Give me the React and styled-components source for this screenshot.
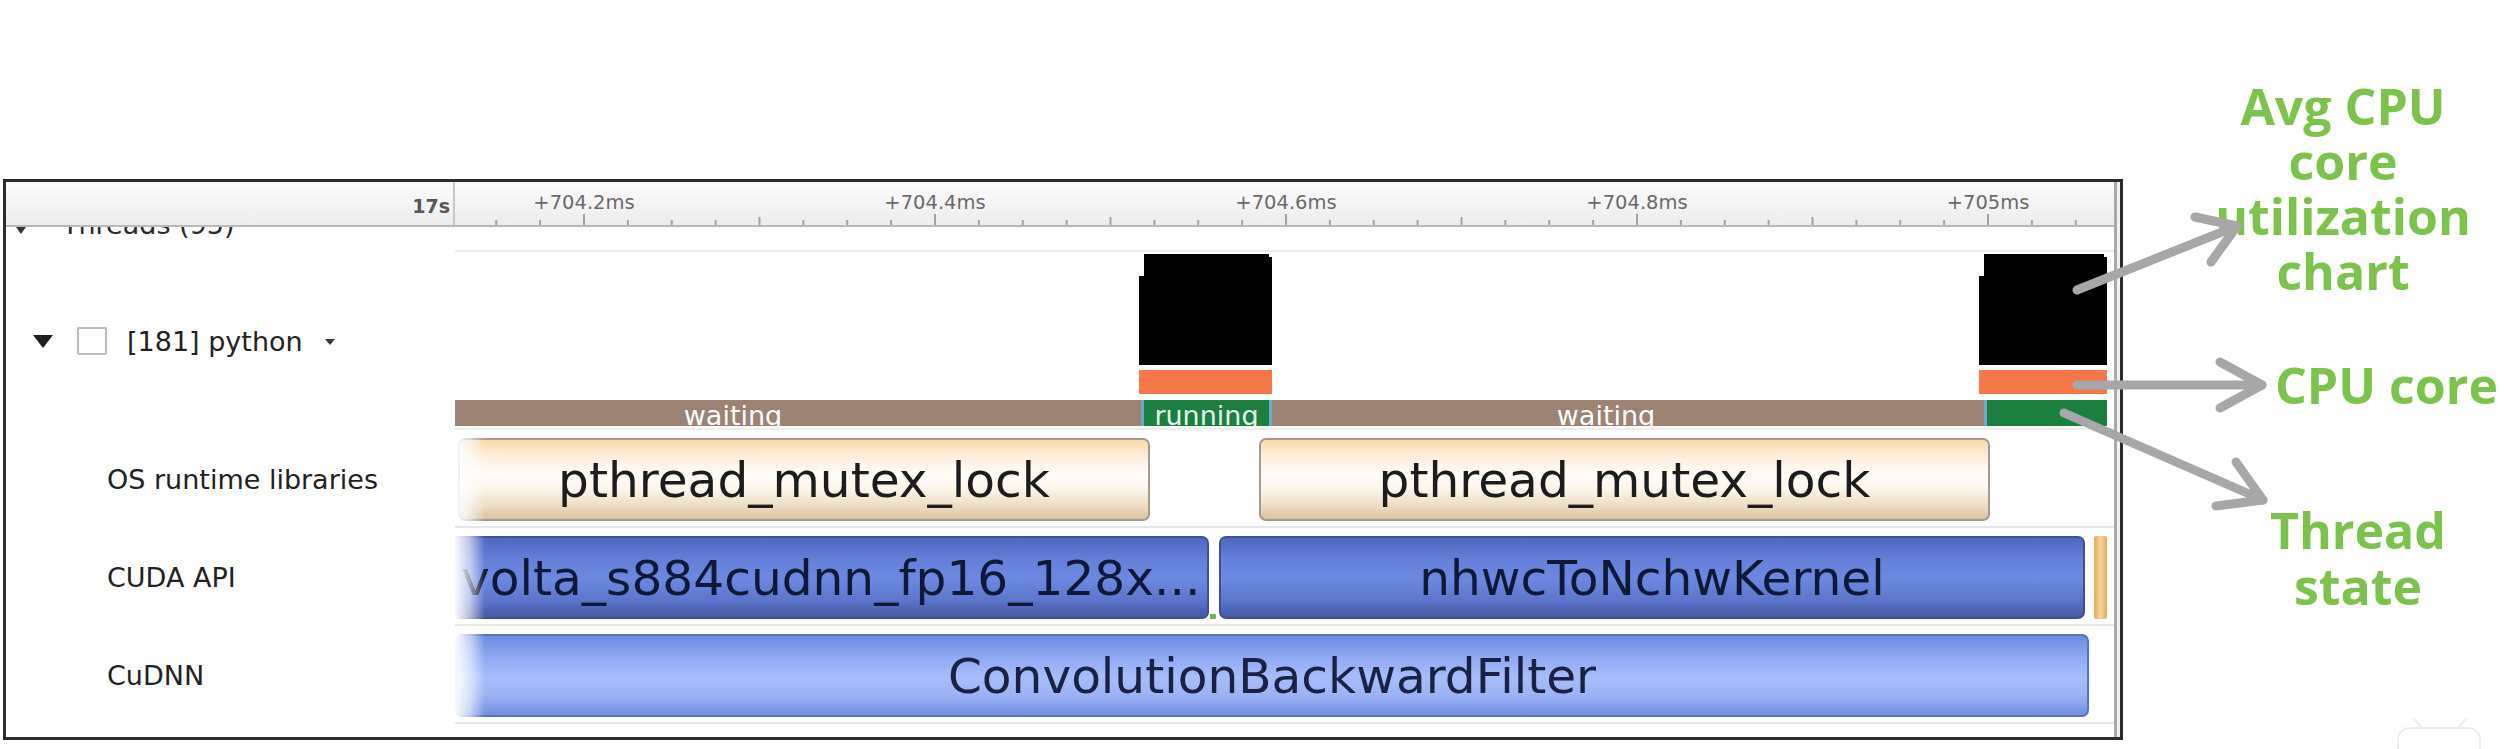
import React from 'react';
import styled, { createGlobalStyle, css } from 'styled-components';

const GlobalStyle = createGlobalStyle`
  html, body { margin: 0; padding: 0; background: #ffffff; }
  body {
    width: 2509px;
    height: 749px;
    overflow: hidden;
    font-family: "DejaVu Sans", "Liberation Sans", sans-serif;
  }
`;

/* ---------- page ---------- */
const Page = styled.div`
  position: relative;
  width: 2509px;
  height: 749px;
  display: flex;
  align-items: flex-start;
  background: #ffffff;
`;

const Panel = styled.section`
  flex: 0 0 2120px;
  margin: 179px 0 0 3px;
  width: 2120px;
  height: 561px;
  box-sizing: border-box;
  border: 3px solid #2c2c2c;
  display: flex;
  background: #ffffff;
  overflow: hidden;
`;

const Main = styled.div`
  flex: 1;
  display: flex;
  flex-direction: column;
  min-width: 0;
`;

const ScrollStrip = styled.div`
  flex: 0 0 6px;
  box-sizing: border-box;
  border-left: 3px solid #a9a9a9;
  background: #f1f1f1;
`;

/* ---------- ruler ---------- */
const Ruler = styled.div`
  display: grid;
  grid-template-columns: 449px 1fr;
  height: 45px;
  box-sizing: border-box;
  border-bottom: 2px solid #b9b9b9;
  background: linear-gradient(#fcfcfc, #ececec);
`;

const RulerCorner = styled.div`
  border-right: 2px solid #c6c6c6;
  display: flex;
  align-items: center;
  justify-content: flex-end;
  padding: 4px 3px 0 0;
  font-size: 19px;
  font-weight: bold;
  color: #585858;
`;

const RulerScale = styled.div`
  position: relative;
  overflow: hidden;
`;

const TickSvg = styled.svg`
  position: absolute;
  left: 0;
  bottom: 0;
`;

const TickLabel = styled.span`
  position: absolute;
  top: 10px;
  transform: translateX(-50%);
  font-size: 19.5px;
  line-height: 22px;
  color: #6a6a6a;
  white-space: nowrap;
`;

/* ---------- rows ---------- */
const Row = styled.div`
  display: grid;
  grid-template-columns: 449px 1fr;
  height: ${(p) => p.$h}px;
`;

const LabelCell = styled.div`
  display: flex;
  align-items: center;
  padding-left: ${(p) => p.$pad}px;
  font-size: 27px;
  color: #222222;
  white-space: nowrap;
  overflow: hidden;
`;

const ClippedLabel = styled.div`
  display: flex;
  align-items: baseline;
  gap: 36px;
  margin-top: -16px;
  line-height: 27px;
  font-size: 27px;
  color: #2a2a2a;
  align-self: flex-start;
`;

const SmallArrow = styled.span`
  display: inline-block;
  width: 0;
  height: 0;
  border-left: 5px solid transparent;
  border-right: 5px solid transparent;
  border-top: 7px solid #333;
`;

const Track = styled.div`
  position: relative;
  overflow: hidden;
  box-sizing: border-box;
  border-bottom: 2px solid ${(p) => p.$line || '#e7e7e7'};
  ${(p) =>
    p.$fade &&
    css`
      &::after {
        content: '';
        position: absolute;
        left: 0;
        top: 0;
        bottom: 0;
        width: 30px;
        background: linear-gradient(to right, rgba(255,255,255,0.97), rgba(255,255,255,0.6) 50%, rgba(255,255,255,0));
        z-index: 3;
      }
    `}
`;

/* python row label parts */
const Disclosure = styled.span`
  width: 0;
  height: 0;
  border-left: 10px solid transparent;
  border-right: 10px solid transparent;
  border-top: 13px solid #1f1f1f;
  margin-right: 24px;
`;

const CheckBox = styled.span`
  width: 30px;
  height: 28px;
  box-sizing: border-box;
  border: 2px solid #bdbdbd;
  border-radius: 2px;
  background: #fdfdfd;
  margin-right: 20px;
`;

const Caret = styled.span`
  width: 0;
  height: 0;
  border-left: 5px solid transparent;
  border-right: 5px solid transparent;
  border-top: 6px solid #3a3a3a;
  margin-left: 22px;
  margin-top: 2px;
`;

/* python track parts */
const CpuBlock = styled.div`
  position: absolute;
  top: 2px;
  height: 111px;
  background: #000000;
  clip-path: polygon(5px 0, calc(100% - 3px) 0, calc(100% - 3px) 3px, 100% 3px, 100% 100%, 0 100%, 0 22px, 5px 22px);
`;

const CoreBlock = styled.div`
  position: absolute;
  top: 118px;
  height: 24px;
  background: #f5774a;
`;

const StateBar = styled.div`
  position: absolute;
  top: 148px;
  left: 0;
  width: 1652px;
  height: 26px;
  background: #9c8374;
  overflow: hidden;
`;

const StateRun = styled.div`
  position: absolute;
  top: 0;
  bottom: 0;
  box-sizing: border-box;
  background: #1a7f3f;
  border-left: 3px solid #6ea8cf;
  border-right: ${(p) => (p.$open ? 'none' : '3px solid #6ea8cf')};
  color: #e6f4ec;
  text-align: center;
  font-size: 27px;
  line-height: 31px;
  white-space: nowrap;
`;

const StateText = styled.span`
  position: absolute;
  top: 0;
  transform: translateX(-50%);
  color: #ffffff;
  font-size: 27px;
  line-height: 31px;
  white-space: nowrap;
`;

/* event boxes */
const kinds = {
  os: css`
    background: linear-gradient(#fad9ab 0%, #fdeedb 20%, #fffcf7 42%, #fcf5ea 62%, #ecdcc3 84%, #d9c3a3 100%);
    border: 2px solid #a59b8d;
    color: #1c1c1c;
  `,
  cuda: css`
    background: linear-gradient(#4f67c2 0%, #6480d9 28%, #6c88e0 52%, #5c76cc 78%, #4657a6 100%);
    border: 2px solid #40528e;
    color: #101838;
  `,
  cudnn: css`
    background: linear-gradient(#6c8be0 0%, #90aaf3 28%, #a7bcfa 52%, #9cb3f5 74%, #7390e0 100%);
    border: 2px solid #5872c6;
    color: #1a2145;
  `,
};

const EventBox = styled.div`
  position: absolute;
  top: 8px;
  height: 83px;
  box-sizing: border-box;
  border-radius: 7px;
  display: flex;
  align-items: center;
  justify-content: ${(p) => (p.$start ? 'flex-start' : 'center')};
  padding-left: ${(p) => (p.$start ? '24px' : '0')};
  font-size: 48.6px;
  white-space: nowrap;
  overflow: hidden;
  ${(p) => kinds[p.$kind]}
`;

const Sliver = styled.div`
  position: absolute;
  top: 8px;
  height: 83px;
  background: linear-gradient(to right, #e3aa5c, #f7d49c 50%, #e4ae62);
  border-radius: 2px;
`;

const GapMark = styled.div`
  position: absolute;
  width: 6px;
  height: 5px;
  background: #6cb251;
  border-radius: 1px;
`;

/* ---------- annotations ---------- */
const AnnColumn = styled.aside`
  display: flex;
  flex-direction: column;
  align-items: flex-start;
  margin-top: 79px;
  flex: 1;
  min-width: 0;
`;

const Callout = styled.div`
  width: 300px;
  margin-left: ${(p) => p.$left}px;
  margin-top: ${(p) => p.$top}px;
  text-align: ${(p) => (p.$align === 'left' ? 'left' : 'center')};
  font-family: "Open Sans", "DejaVu Sans", sans-serif;
  font-weight: 700;
  font-size: 50px;
  line-height: ${(p) => p.$lh}px;
  color: #7cc24d;
  white-space: nowrap;
`;

const Overlay = styled.svg`
  position: absolute;
  left: 0;
  top: 0;
  pointer-events: none;
  z-index: 10;
`;

/* ---------- data ---------- */
const TICK0 = 129;
const STEP = 351 / 8;
const ticks = Array.from({ length: 42 }, (_, i) => i - 3)
  .map((i) => ({ x: TICK0 + i * STEP, h: i % 8 === 0 ? 11 : i % 4 === 0 ? 8 : 5 }))
  .filter((t) => t.x > 2 && t.x < 1656);

const tickLabels = ['+704.2ms', '+704.4ms', '+704.6ms', '+704.8ms', '+705ms'];

const cpuSlices = [
  { left: 684, width: 133 },
  { left: 1524, width: 128 },
];

const osBoxes = [
  { left: 3, width: 692, text: 'pthread_mutex_lock' },
  { left: 804, width: 731, text: 'pthread_mutex_lock' },
];

const cudaBoxes = [
  { left: -20, width: 774, text: 'volta_s884cudnn_fp16_128x...', start: true },
  { left: 764, width: 866, text: 'nhwcToNchwKernel' },
];

function Arrow({ x1, y1, x2, y2, a, b }) {
  return (
    <g stroke="#a7a7a7" strokeWidth="9" strokeLinecap="round" strokeLinejoin="round" fill="none">
      <line x1={x1} y1={y1} x2={x2} y2={y2} />
      <polyline points={`${a[0]},${a[1]} ${x2},${y2} ${b[0]},${b[1]}`} />
    </g>
  );
}

export default function App() {
  return (
    <>
      <GlobalStyle />
      <Page>
        <Panel>
          <Main>
            <Ruler>
              <RulerCorner>17s</RulerCorner>
              <RulerScale>
                <TickSvg width="1660" height="43">
                  {ticks.map((t, i) => (
                    <line key={i} x1={t.x} x2={t.x} y1={43 - t.h} y2={43} stroke="#a2a2a2" strokeWidth="2" />
                  ))}
                </TickSvg>
                {tickLabels.map((l, i) => (
                  <TickLabel key={l} style={{ left: TICK0 + i * 351 }}>{l}</TickLabel>
                ))}
              </RulerScale>
            </Ruler>

            <Row $h={25}>
              <LabelCell $pad={10}>
                <ClippedLabel>
                  <SmallArrow />
                  <span>Threads (95)</span>
                </ClippedLabel>
              </LabelCell>
              <Track $line="#ececec" />
            </Row>

            <Row $h={178}>
              <LabelCell $pad={27}>
                <Disclosure />
                <CheckBox />
                <span>[181] python</span>
                <Caret />
              </LabelCell>
              <Track $line="#eeeeee">
                {cpuSlices.map((s, i) => (
                  <CpuBlock key={i} style={{ left: s.left, width: s.width }} />
                ))}
                {cpuSlices.map((s, i) => (
                  <CoreBlock key={i} style={{ left: s.left, width: s.width }} />
                ))}
                <StateBar>
                  <StateText style={{ left: 278 }}>waiting</StateText>
                  <StateRun style={{ left: 686, width: 131 }}>running</StateRun>
                  <StateText style={{ left: 1151 }}>waiting</StateText>
                  <StateRun $open style={{ left: 1529, width: 123 }} />
                </StateBar>
              </Track>
            </Row>

            <Row $h={98}>
              <LabelCell $pad={101}>OS runtime libraries</LabelCell>
              <Track $fade>
                {osBoxes.map((b, i) => (
                  <EventBox key={i} $kind="os" style={{ left: b.left, width: b.width }}>{b.text}</EventBox>
                ))}
              </Track>
            </Row>

            <Row $h={98}>
              <LabelCell $pad={101}>CUDA API</LabelCell>
              <Track $fade>
                {cudaBoxes.map((b, i) => (
                  <EventBox key={i} $kind="cuda" $start={b.start} style={{ left: b.left, width: b.width }}>{b.text}</EventBox>
                ))}
                <Sliver style={{ left: 1639, width: 13 }} />
                <GapMark style={{ left: 755, top: 86 }} />
              </Track>
            </Row>

            <Row $h={98}>
              <LabelCell $pad={101}>CuDNN</LabelCell>
              <Track $fade>
                <EventBox $kind="cudnn" style={{ left: 0, width: 1634 }}>ConvolutionBackwardFilter</EventBox>
              </Track>
            </Row>
          </Main>
          <ScrollStrip />
        </Panel>

        <AnnColumn>
          <Callout $left={70} $top={0} $lh={55}>
            Avg CPU<br />core<br />utilization<br />chart
          </Callout>
          <Callout $left={152} $top={59} $lh={55} $align="left">CPU core</Callout>
          <Callout $left={85} $top={89} $lh={56}>
            Thread<br />state
          </Callout>
        </AnnColumn>

        <Overlay width="2509" height="749" viewBox="0 0 2509 749">
          <Arrow x1={2077} y1={290} x2={2237} y2={226} a={[2195, 217]} b={[2211, 262]} />
          <Arrow x1={2077} y1={385} x2={2262} y2={385} a={[2220, 362]} b={[2220, 408]} />
          <Arrow x1={2064} y1={413} x2={2263} y2={500} a={[2236, 462]} b={[2216, 506]} />
          <g fill="#ffffff" stroke="#ececec" strokeWidth="2">
            <line x1="2424" y1="730" x2="2414" y2="719" />
            <line x1="2456" y1="730" x2="2466" y2="719" />
            <rect x="2398" y="728" width="82" height="40" rx="12" />
          </g>
        </Overlay>
      </Page>
    </>
  );
}
